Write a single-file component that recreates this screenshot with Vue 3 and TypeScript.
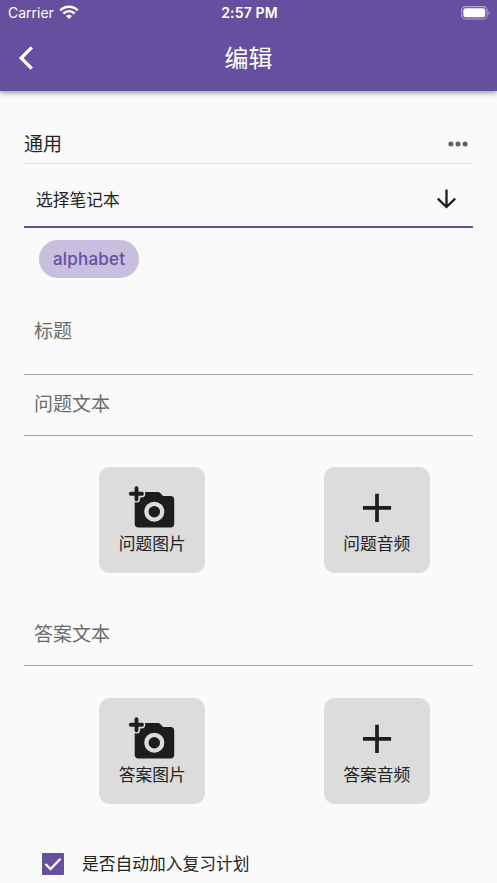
<script setup lang="ts">
import { ref } from 'vue'

interface Field {
  key: string
  label: string
  image?: string
  audio?: string
}

const notebook = ref('alphabet')
const autoReview = ref(true)
const fields: Field[] = [
  { key: 'title', label: '标题' },
  { key: 'question', label: '问题文本', image: '问题图片', audio: '问题音频' },
  { key: 'answer', label: '答案文本', image: '答案图片', audio: '答案音频' },
]
</script>

<template>
  <div class="screen">
    <header class="header">
      <div class="status">
        <div class="carrier">
          <span>Carrier</span>
          <svg class="wifi" width="20" height="14" viewBox="0 0 20 14">
            <g fill="none" stroke="#fff" stroke-width="2.5">
              <path d="M1.300 5.300C6.300.4 13.700.4 18.700 5.300" />
              <path d="M4.400 8.500C7.700 5.500 12.300 5.500 15.600 8.500" />
            </g>
            <path d="M7 11Q10 8.500 13 11L10 14Z" fill="#fff" />
          </svg>
        </div>
        <span class="time">2:57 PM</span>
        <div class="power">
          <svg width="30" height="14" viewBox="0 0 30 14">
            <rect x=".6" y=".6" width="25.500" height="12.400" rx="3.800" fill="none" stroke="#b2a3d2" stroke-width="1.100" />
            <rect x="2.300" y="2.300" width="22" height="9" rx="2.200" fill="#fff" />
            <path d="M27.600 4.700Q30 6.800 27.600 8.900Z" fill="#b2a3d2" />
          </svg>
        </div>
      </div>
      <div class="nav">
        <button class="back" aria-label="返回">
          <svg width="16" height="24" viewBox="0 0 16 24">
            <path d="M13.800 1.300L3.200 12L13.800 22.700" fill="none" stroke="#fff" stroke-width="3.300" />
          </svg>
        </button>
        <h1>编辑</h1>
      </div>
    </header>

    <main class="form">
      <div class="section">
        <span>通用</span>
        <svg width="20" height="6" viewBox="0 0 20 6" fill="#5e5e5e">
          <circle cx="2.900" cy="3" r="2.500" />
          <circle cx="10" cy="3" r="2.500" />
          <circle cx="17.100" cy="3" r="2.500" />
        </svg>
      </div>

      <div class="select">
        <span>选择笔记本</span>
        <svg width="20" height="20" viewBox="0 0 20 20">
          <path d="M9.500 .5V18M.8 9.600L9.500 18L18.200 9.600" fill="none" stroke="#1c1c1c" stroke-width="2.300" />
        </svg>
      </div>
      <div class="chips"><span class="chip">{{ notebook }}</span></div>

      <template v-for="field in fields" :key="field.key">
        <div class="field" :class="field.key">{{ field.label }}</div>
        <div v-if="field.image" class="media" :class="`${field.key}-media`">
          <button class="tile">
            <svg width="48" height="44" viewBox="0 0 48 44">
              <path d="M10.500 8H30Q31.300 8 32.200 9L35 12H42.500Q46.200 12 46.200 15.700V39.800Q46.200 43.500 42.500 43.500H10.500Q6.700 43.500 6.700 39.800V12Z" fill="#1d1d1d" />
              <path d="M8.500 4.700V15M3.300 9.800H13.700" stroke="#dcdcdc" stroke-width="7.200" stroke-linecap="round" />
              <path d="M8.500 4.200V15.300M2.800 9.800H14" stroke="#1d1d1d" stroke-width="3.900" stroke-linecap="round" />
              <circle cx="26.300" cy="27.700" r="7.900" fill="#1d1d1d" stroke="#dcdcdc" stroke-width="4.300" />
            </svg>
            <span>{{ field.image }}</span>
          </button>
          <button class="tile">
            <svg width="48" height="44" viewBox="0 0 48 44">
              <path d="M24 9.700V38M9.900 23.800H38.100" stroke="#1d1d1d" stroke-width="3.700" />
            </svg>
            <span>{{ field.audio }}</span>
          </button>
        </div>
      </template>

      <label class="review">
        <input v-model="autoReview" type="checkbox">
        <span class="box">
          <svg v-if="autoReview" width="22" height="22" viewBox="0 0 22 22">
            <path d="M3.500 11L8.500 16L18.500 5.800" fill="none" stroke="#fff" stroke-width="2.300" />
          </svg>
        </span>
        <span>是否自动加入复习计划</span>
      </label>
    </main>
  </div>
</template>

<style>
body {
  background: #fafafa;
  overflow: hidden;
}
</style>

<style scoped>
.screen {
  height: 883px;
  overflow: hidden;
  background: #fafafa;
  color: #222;
  font-family: Inter, "Noto Sans CJK SC", sans-serif;
  font-weight: 400;
}
.screen * { box-sizing: border-box; }
svg { display: block; flex: none; }
button {
  padding: 0;
  border: 0;
  background: none;
  color: inherit;
  font: inherit;
}
.header {
  height: 91px;
  background: #674fa0;
  color: #fff;
  box-shadow: 0 2px 5px rgb(0 0 0 / 38%);
}
.status {
  height: 26px;
  padding: 0 6px 0 8px;
  display: grid;
  grid-template-columns: 1fr auto 1fr;
  align-items: center;
  font-size: 14px;
  line-height: 26px;
}
.carrier { display: flex; align-items: center; gap: 5px; }
.wifi { margin-top: -3px; }
.time { font-weight: 600; letter-spacing: .15px; }
.power { display: flex; justify-content: flex-end; margin-top: -1px; }
.nav {
  height: 64px;
  padding: 0 18px;
  display: grid;
  grid-template-columns: 1fr auto 1fr;
  align-items: center;
}
h1 {
  margin: 0;
  padding-top: 2px;
  font-size: 24px;
  font-weight: 400;
  line-height: 36px;
}
.form { padding: 34px 24px 0; }
.section {
  height: 39px;
  padding-right: 5px;
  display: flex;
  align-items: center;
  justify-content: space-between;
  border-bottom: 1px solid #dedede;
  font-size: 19px;
  line-height: 28px;
}
.section span { padding-top: 2px; }
.select {
  height: 64px;
  padding: 8px 16px 0 12px;
  display: flex;
  align-items: center;
  justify-content: space-between;
  border-bottom: 2px solid #674fa0;
  font-size: 16.75px;
  line-height: 24px;
}
.select span { padding-top: 1px; }
.chips { height: 64px; padding: 12px 0 0 15px; }
.chip {
  display: inline-block;
  height: 38px;
  padding: 0 14px;
  border-radius: 19px;
  background: #c8bedd;
  color: #674fa0;
  font-size: 17px;
  font-weight: 500;
  letter-spacing: .2px;
  line-height: 38px;
}
.field {
  padding-left: 10px;
  border-bottom: 1px solid #a5a5a5;
  color: #6b6b6b;
  font-size: 19px;
  line-height: 28px;
}
.title { height: 83px; padding-top: 26px; }
.question { height: 61px; padding-top: 16px; }
.answer { height: 61px; padding-top: 16px; }
.media {
  height: 169px;
  padding: 31px 0 0;
  margin: 0 -16px 0 16px;
  display: grid;
  grid-template-columns: 1fr 1fr;
  justify-items: center;
}
.answer-media { height: 186px; padding-top: 32px; }
.tile {
  width: 106px;
  height: 106px;
  padding-top: 17px;
  display: flex;
  flex-direction: column;
  align-items: center;
  border-radius: 11px;
  background: #dcdcdc;
  font-size: 16.75px;
  line-height: 24px;
}
.tile span { margin-top: 4px; }
.review {
  height: 24px;
  padding-left: 18px;
  display: flex;
  align-items: center;
  gap: 18px;
  font-size: 16.75px;
  line-height: 24px;
}
.review input { display: none; }
.box {
  width: 22px;
  height: 22px;
  border-radius: 1px;
  background: #674fa0;
}
</style>
